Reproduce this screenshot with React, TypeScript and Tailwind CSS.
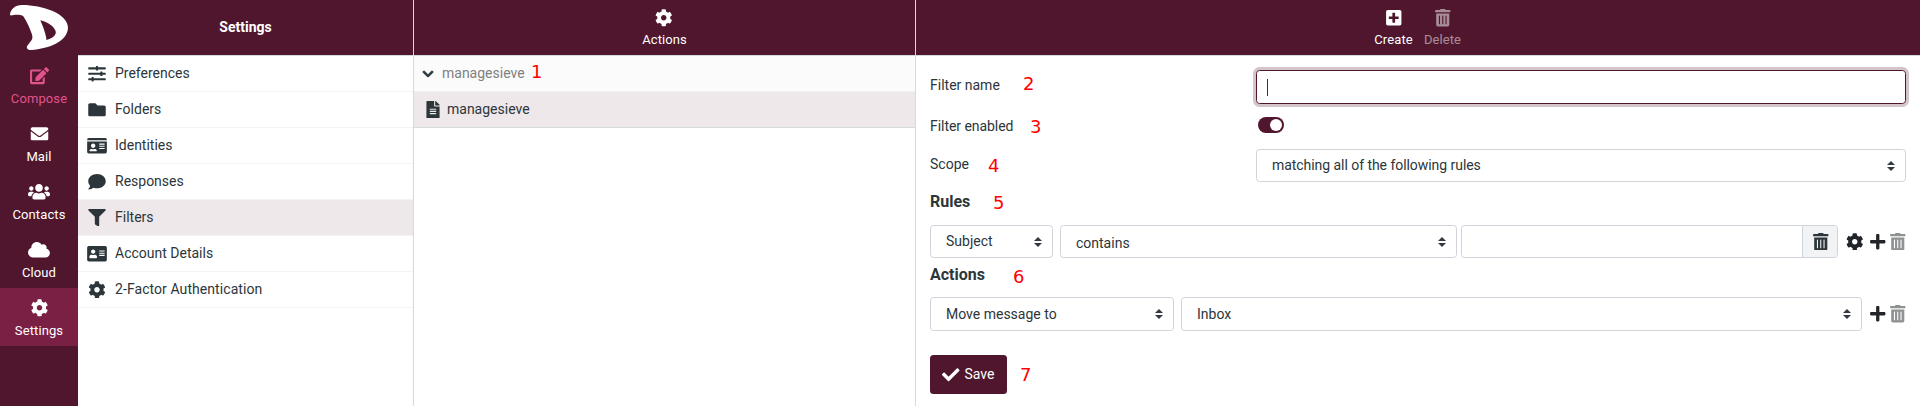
import type { ReactNode } from "react";
import type { IconType } from "react-icons";
import {
  FaAddressCard,
  FaCheck,
  FaChevronDown,
  FaCloud,
  FaCog,
  FaComment,
  FaEdit,
  FaEnvelope,
  FaFileAlt,
  FaFilter,
  FaFolder,
  FaIdCard,
  FaPlus,
  FaPlusSquare,
  FaSlidersH,
  FaTrashAlt,
  FaUsers,
} from "react-icons/fa";

const tasks: { label: string; icon: IconType; style: string }[] = [
  { label: "Compose", icon: FaEdit, style: "text-[#e0538c]" },
  { label: "Mail", icon: FaEnvelope, style: "text-white" },
  { label: "Contacts", icon: FaUsers, style: "text-white" },
  { label: "Cloud", icon: FaCloud, style: "text-white" },
  { label: "Settings", icon: FaCog, style: "bg-[#7a2045] text-white" },
];

const sections: { label: string; icon: IconType; active?: boolean; spacing?: string }[] = [
  { label: "Preferences", icon: FaSlidersH },
  { label: "Folders", icon: FaFolder },
  { label: "Identities", icon: FaIdCard },
  { label: "Responses", icon: FaComment },
  { label: "Filters", icon: FaFilter, active: true },
  { label: "Account Details", icon: FaAddressCard },
  { label: "2-Factor Authentication", icon: FaCog, spacing: "tracking-[0.07px]" },
];

function Logo() {
  return (
    <svg viewBox="0 0 58 46" className="h-[46px] w-[58px]" fill="#fff">
      <path
        fillRule="evenodd"
        d="M0 9 C1 4 5 .3 12 .1 C32 0 58 8.500 58 23 C57 36.500 40 43.500 21 45 C17 45.200 16 42.500 17.500 40.500 L20.500 36.500 C22.500 34.500 22.800 32.500 22 29.500 C20 23.500 17 17 13.500 11.500 C12 9.800 9 9.800 6.500 9.800 C4.500 9.800 3 10.500 1 10.500 C.2 10.300 0 10 0 9 Z M30.300 15.200 C33 21 35 27 36.200 32.500 C36.500 34.500 35.500 35 37 34.700 C42 33.500 46 30.500 45.800 27 C45 21.500 37.500 17 30.300 15.200 Z"
      />
    </svg>
  );
}

function Note({ n, place }: { n: number; place: string }) {
  return (
    <span
      className={`absolute font-['DejaVu_Sans',sans-serif] text-[18px] leading-[18px] text-[#ff0000] ${place}`}
    >
      {n}
    </span>
  );
}

function HeaderButton({
  icon: Icon,
  label,
  iconStyle = "",
  dim,
}: {
  icon: IconType;
  label: string;
  iconStyle?: string;
  dim?: boolean;
}) {
  return (
    <button className={`flex w-[49px] flex-col items-center text-white ${dim ? "opacity-50" : ""}`}>
      <Icon className={`mt-[9px] size-[17.5px] ${iconStyle}`} />
      <span className="mt-1 text-[13px] leading-[18px] tracking-[0.1px]">{label}</span>
    </button>
  );
}

function Carets() {
  return (
    <svg viewBox="0 0 4 5" className="h-[10px] w-2 shrink-0" fill="#343a40">
      <path d="M2 0L0 2h4zm0 5L0 3h4z" />
    </svg>
  );
}

function Select({ className, children }: { className: string; children: ReactNode }) {
  return (
    <div
      className={`flex items-center justify-between rounded-[3.5px] border border-[#ced4da] bg-white pr-[10px] pl-[15px] ${className}`}
    >
      <span>{children}</span>
      <Carets />
    </div>
  );
}

export default function App() {
  return (
    <div className="relative flex h-[406px] w-[1920px] overflow-hidden bg-white font-[Roboto,sans-serif] text-[14px] leading-[21px] text-[#2c363a]">
      <nav className="flex w-[78px] shrink-0 flex-col bg-[#4f162d]">
        <div className="flex h-14 pt-[5px] pl-[10px]">
          <Logo />
        </div>
        {tasks.map(({ label, icon: Icon, style }) => (
          <a key={label} className={`flex h-[58px] flex-col items-center ${style}`}>
            <Icon
              className={`mt-[11px] h-[17.5px] ${label === "Contacts" || label === "Cloud" ? "w-[22px]" : "w-[19px]"}`}
            />
            <span className="mt-1 text-[13px] leading-[19px] tracking-[0.1px]">{label}</span>
          </a>
        ))}
      </nav>

      <section className="flex w-[336px] shrink-0 flex-col border-r border-[#d4dbde]">
        <header className="flex h-14 items-center justify-center border-b border-[#d4dbde] bg-[#4f162d] font-bold text-white">
          Settings
        </header>
        {sections.map(({ label, icon: Icon, active, spacing = "" }) => (
          <a
            key={label}
            className={`flex h-9 items-center border-b border-[#f1f3f4] pl-[9px] ${active ? "bg-[#efe8ea]" : ""}`}
          >
            <Icon className="h-[17.5px] w-5" />
            <span className={`ml-2 ${spacing}`}>{label}</span>
          </a>
        ))}
      </section>

      <section className="flex w-[502px] shrink-0 flex-col border-r border-[#d4dbde]">
        <header className="flex h-14 justify-center border-b border-[#d4dbde] bg-[#4f162d]">
          <HeaderButton icon={FaCog} label="Actions" iconStyle="mr-px" />
        </header>
        <div className="flex h-9 items-center border-b border-[#f1f3f4] bg-[#fbfbfb] pl-2 text-[#808080]">
          <FaChevronDown className="size-3 overflow-visible text-[#2c363a]" stroke="currentColor" strokeWidth={36} />
          <span className="ml-2">managesieve</span>
        </div>
        <div className="flex h-9 items-center border-b border-[#d4dbde] bg-[#efe8ea] pl-3">
          <FaFileAlt className="h-[17.5px] w-[14px]" />
          <span className="ml-[7px]">managesieve</span>
        </div>
      </section>

      <main className="flex min-w-0 flex-1 flex-col">
        <header className="flex h-14 shrink-0 justify-center border-b border-[#d4dbde] bg-[#4f162d]">
          <HeaderButton icon={FaPlusSquare} label="Create" />
          <HeaderButton icon={FaTrashAlt} label="Delete" dim />
        </header>
        <form className="flex flex-col px-[14px]">
          <div className="mt-[14px] flex h-[34px] items-center">
            <label className="w-[326px] pb-1">Filter name</label>
            <div className="flex h-[34px] flex-1 items-center rounded-[3.5px] border border-[#4f162d] pl-[10px] shadow-[0_0_0_3px_rgba(79,22,45,0.25)]">
              <span className="h-[17px] w-px bg-[#2c363a]" />
            </div>
          </div>
          <div className="mt-[9px] flex h-6 items-center">
            <label className="w-[328px] pt-[3px] tracking-[-0.05px]">Filter enabled</label>
            <span className="flex h-4 w-[26px] items-center justify-end rounded-full bg-[#4f162d] pr-0.5">
              <span className="size-3 rounded-full bg-white" />
            </span>
          </div>
          <div className="mt-3 flex h-[33px] items-center">
            <label className="w-[326px] pb-0.5">Scope</label>
            <Select className="h-[33px] flex-1 pl-[14px] tracking-[-0.05px]">
              matching all of the following rules
            </Select>
          </div>
          <h2 className="mt-2 h-[35px] text-[16px] leading-6 font-bold">Rules</h2>
          <div className="flex h-[33px]">
            <Select className="w-[123px] shrink-0">Subject</Select>
            <Select className="ml-[7px] w-[397px] shrink-0">
              <span className="block pt-[3px]">contains</span>
            </Select>
            <div className="ml-1 flex w-[377px] shrink-0 rounded-[3.5px] border border-[#ced4da]">
              <div className="flex-1" />
              <div className="flex w-[35px] items-center justify-center rounded-r-[2.5px] border-l border-[#ced4da] bg-[#f1f3f4] pl-px">
                <FaTrashAlt className="size-[17.5px]" />
              </div>
            </div>
            <div className="ml-2 flex shrink-0 items-center text-[#212529]">
              <FaCog className="size-[17.5px]" />
              <FaPlus className="ml-[5.5px] size-[17.5px]" />
              <FaTrashAlt className="ml-0.5 size-[17.5px] opacity-50" />
            </div>
          </div>
          <h2 className="mt-[5px] h-[34px] text-[16px] leading-6 font-bold">Actions</h2>
          <div className="flex h-[34px]">
            <Select className="w-[244px] shrink-0">Move message to</Select>
            <Select className="ml-[7px] w-[681px] shrink-0">Inbox</Select>
            <div className="ml-[7px] flex shrink-0 items-center text-[#212529]">
              <FaPlus className="size-[17.5px]" />
              <FaTrashAlt className="ml-0.5 size-[17.5px] opacity-50" />
            </div>
          </div>
          <button
            type="button"
            className="mt-6 flex h-[39px] w-[77px] items-center rounded-[3.5px] bg-[#4f162d] pl-3 text-white"
          >
            <FaCheck className="size-[17.5px]" />
            <span className="ml-[5px]">Save</span>
          </button>
        </form>
      </main>

      <Note n={1} place="left-[531px] top-[63px]" />
      <Note n={2} place="left-[1023px] top-[75px]" />
      <Note n={3} place="left-[1030px] top-[118px]" />
      <Note n={4} place="left-[988px] top-[157px]" />
      <Note n={5} place="left-[993px] top-[194px]" />
      <Note n={6} place="left-[1013px] top-[268px]" />
      <Note n={7} place="left-[1020px] top-[366px]" />
    </div>
  );
}
